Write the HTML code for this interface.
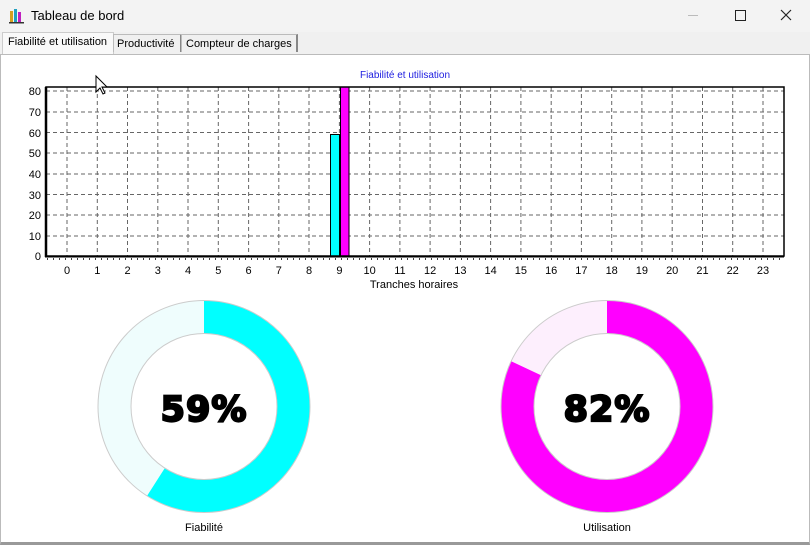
<!DOCTYPE html><html><head><style>
body{margin:0;width:810px;height:544px;background:#fff;font-family:"Liberation Sans",sans-serif;overflow:hidden;position:relative}
.t{position:absolute;white-space:nowrap}
.pc{font-family:"DejaVu Sans",sans-serif;font-weight:bold;font-size:35px}
</style></head><body>
<div style="position:absolute;left:0;top:0;width:810px;height:32px;background:#f3f3f3"></div>
<div style="position:absolute;left:0;top:32px;width:810px;height:22px;background:#f0f0f0"></div>
<svg style="position:absolute;left:9px;top:8px" width="16" height="16"><rect x="1" y="3" width="3" height="11" fill="#d4a020"/><rect x="5" y="1" width="3" height="13" fill="#20a0c0"/><rect x="9" y="4" width="3" height="10" fill="#c020c0"/><rect x="0" y="14" width="15" height="1.5" fill="#333"/></svg>
<div class="t" style="left:31px;top:8px;font-size:13px;color:#000">Tableau de bord</div>
<div style="position:absolute;left:688px;top:15px;width:10px;height:1px;background:#bbb"></div>
<div style="position:absolute;left:735px;top:10px;width:9px;height:9px;border:1px solid #222"></div>
<svg style="position:absolute;left:780px;top:9px" width="12" height="12"><path d="M1 1L11 11M11 1L1 11" stroke="#222" stroke-width="1.2"/></svg>
<div style="position:absolute;left:2px;top:32px;width:110px;height:22px;background:#f9f9f9;border:1px solid #ccc;border-bottom:none"></div>
<div class="t" style="left:8px;top:36px;font-size:11px">Fiabilité et utilisation</div>
<div style="position:absolute;left:113px;top:34px;width:66px;height:17px;border:1px solid #bbb;border-right:2px solid #888;border-bottom:none"></div>
<div class="t" style="left:117px;top:38px;font-size:11px">Productivité</div>
<div style="position:absolute;left:181px;top:34px;width:114px;height:17px;border:1px solid #bbb;border-right:2px solid #888;border-bottom:none"></div>
<div class="t" style="left:186px;top:38px;font-size:11px">Compteur de charges</div>
<div style="position:absolute;left:0;top:54px;width:808px;height:487px;border:1px solid #bbb;border-bottom:3px solid #999;background:#fff"></div>
<svg style="position:absolute;left:0;top:0" width="810" height="544" font-family="Liberation Sans,sans-serif" font-size="11">
<text x="405" y="78" fill="#2020e0" text-anchor="middle" font-size="10">Fiabilité et utilisation</text>
<g stroke="#666" stroke-dasharray="4,3" stroke-width="1">
<line x1="46" y1="91" x2="784" y2="91"/><line x1="46" y1="112" x2="784" y2="112"/><line x1="46" y1="132.5" x2="784" y2="132.5"/><line x1="46" y1="153" x2="784" y2="153"/><line x1="46" y1="174" x2="784" y2="174"/><line x1="46" y1="194.5" x2="784" y2="194.5"/><line x1="46" y1="215" x2="784" y2="215"/><line x1="46" y1="236" x2="784" y2="236"/>
</g>
<g stroke="#666" stroke-dasharray="4,3">
<line x1="67" y1="87" x2="67" y2="256"/><line x1="97.3" y1="87" x2="97.3" y2="256"/><line x1="127.5" y1="87" x2="127.5" y2="256"/><line x1="157.8" y1="87" x2="157.8" y2="256"/><line x1="188" y1="87" x2="188" y2="256"/><line x1="218.3" y1="87" x2="218.3" y2="256"/><line x1="248.6" y1="87" x2="248.6" y2="256"/><line x1="278.8" y1="87" x2="278.8" y2="256"/><line x1="309" y1="87" x2="309" y2="256"/><line x1="339.4" y1="87" x2="339.4" y2="256"/><line x1="369.6" y1="87" x2="369.6" y2="256"/><line x1="399.9" y1="87" x2="399.9" y2="256"/><line x1="430.1" y1="87" x2="430.1" y2="256"/><line x1="460.4" y1="87" x2="460.4" y2="256"/><line x1="490.6" y1="87" x2="490.6" y2="256"/><line x1="520.9" y1="87" x2="520.9" y2="256"/><line x1="551.2" y1="87" x2="551.2" y2="256"/><line x1="581.4" y1="87" x2="581.4" y2="256"/><line x1="611.7" y1="87" x2="611.7" y2="256"/><line x1="641.9" y1="87" x2="641.9" y2="256"/><line x1="672.2" y1="87" x2="672.2" y2="256"/><line x1="702.5" y1="87" x2="702.5" y2="256"/><line x1="732.7" y1="87" x2="732.7" y2="256"/><line x1="763" y1="87" x2="763" y2="256"/>
</g>
<rect x="330.5" y="134.5" width="9" height="121.5" fill="#00ffff" stroke="#000"/>
<rect x="340.5" y="87" width="8.5" height="169" fill="#ff00ff" stroke="#000"/>
<rect x="46" y="87" width="738" height="169" fill="none" stroke="#000" stroke-width="1.5"/>
<line x1="46" y1="87" x2="46" y2="257" stroke="#000" stroke-width="2.5"/>
<line x1="45" y1="256.5" x2="784" y2="256.5" stroke="#000" stroke-width="2"/>
<line x1="47" y1="259" x2="784" y2="259" stroke="#000" stroke-dasharray="1,5" stroke-width="1.5"/>
<g text-anchor="end" font-size="11"><text x="41" y="95">80</text><text x="41" y="116">70</text><text x="41" y="137">60</text><text x="41" y="157">50</text><text x="41" y="178">40</text><text x="41" y="199">30</text><text x="41" y="219">20</text><text x="41" y="240">10</text><text x="41" y="260">0</text></g>
<g text-anchor="middle" font-size="11"><text x="67" y="274">0</text><text x="97.3" y="274">1</text><text x="127.5" y="274">2</text><text x="157.8" y="274">3</text><text x="188" y="274">4</text><text x="218.3" y="274">5</text><text x="248.6" y="274">6</text><text x="278.8" y="274">7</text><text x="309" y="274">8</text><text x="339.4" y="274">9</text><text x="369.6" y="274">10</text><text x="399.9" y="274">11</text><text x="430.1" y="274">12</text><text x="460.4" y="274">13</text><text x="490.6" y="274">14</text><text x="520.9" y="274">15</text><text x="551.2" y="274">16</text><text x="581.4" y="274">17</text><text x="611.7" y="274">18</text><text x="641.9" y="274">19</text><text x="672.2" y="274">20</text><text x="702.5" y="274">21</text><text x="732.7" y="274">22</text><text x="763" y="274">23</text>
<text x="414" y="288">Tranches horaires</text></g>
<circle cx="204" cy="406.5" r="89.5" fill="none" stroke="#effdfd" stroke-width="33"/>
<circle cx="204" cy="406.5" r="89.5" fill="none" stroke="#00ffff" stroke-width="33" stroke-dasharray="331.8 600" transform="rotate(-90 204 406.5)"/>
<circle cx="204" cy="406.5" r="106" fill="none" stroke="#ccc" stroke-width="1"/><circle cx="204" cy="406.5" r="73" fill="none" stroke="#ccc" stroke-width="1"/>
<text x="204" y="421" text-anchor="middle" class="pc" stroke="#000" stroke-width="2.2" letter-spacing="1">59%</text>
<text x="204" y="531" text-anchor="middle">Fiabilité</text>
<circle cx="607" cy="406.5" r="89.5" fill="none" stroke="#fdeffd" stroke-width="33"/>
<circle cx="607" cy="406.5" r="89.5" fill="none" stroke="#ff00ff" stroke-width="33" stroke-dasharray="461.1 600" transform="rotate(-90 607 406.5)"/>
<circle cx="607" cy="406.5" r="106" fill="none" stroke="#ccc" stroke-width="1"/><circle cx="607" cy="406.5" r="73" fill="none" stroke="#ccc" stroke-width="1"/>
<text x="607" y="421" text-anchor="middle" class="pc" stroke="#000" stroke-width="2.2" letter-spacing="1">82%</text>
<text x="607" y="531" text-anchor="middle">Utilisation</text>
<path d="M96 76L96 92L100 88L103 94L105 93L102 87L107 87Z" fill="#fff" stroke="#000" stroke-width="1"/>
</svg>
</body></html>
